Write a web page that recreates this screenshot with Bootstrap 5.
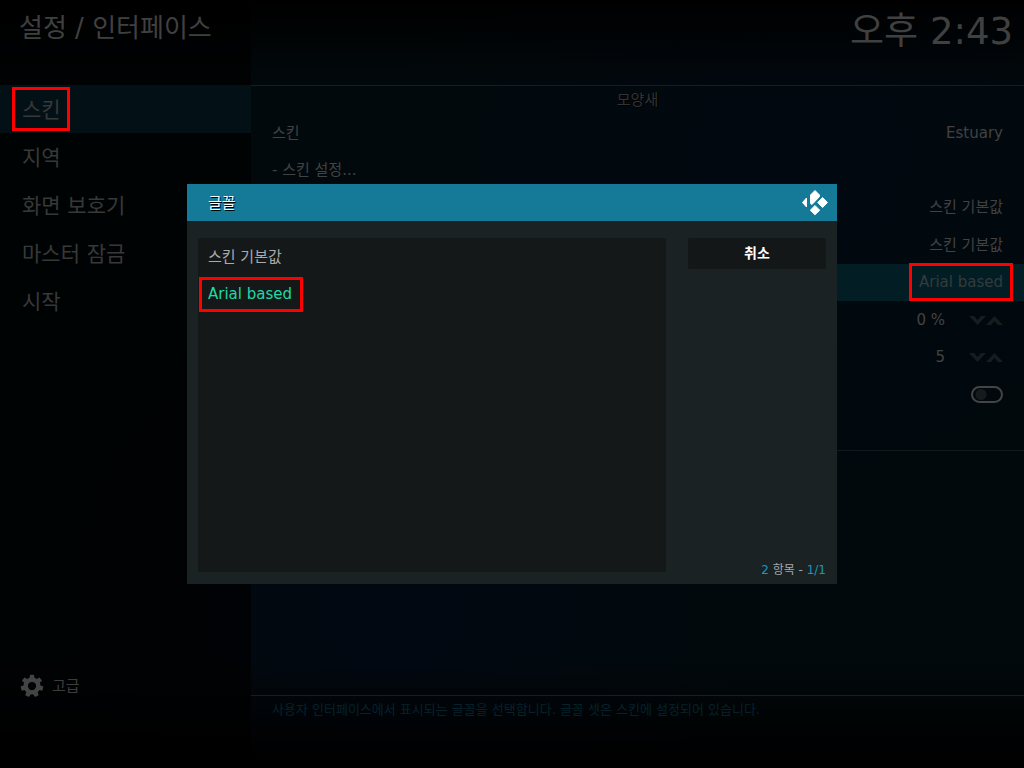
<!DOCTYPE html>
<html lang="ko">
<head>
<meta charset="utf-8">
<meta name="viewport" content="width=device-width, initial-scale=1">
<title>설정 / 인터페이스</title>
<link href="https://cdn.jsdelivr.net/npm/bootstrap@5.3.0/dist/css/bootstrap.min.css" rel="stylesheet">
<style>
body{font-family:"DejaVu Sans","Noto Sans CJK KR",sans-serif;font-size:15px;line-height:20px;color:#424242;background:#000}
.screen{background:linear-gradient(#000 0,transparent 90px,transparent calc(100% - 110px),#000 calc(100% - 10px)),radial-gradient(circle at 78% 20%,#020810 0,transparent 40%),radial-gradient(circle at 38% 80%,#020812 0,transparent 40%),#01090c}
.side{flex:0 0 251px;background:rgba(0,0,0,.65)}
.topbar{height:85px}
.page-title{font-size:26px;line-height:36px;padding:10px 0 0 19px;color:#404040}
.clock{font-size:37px;line-height:42px;padding:11px 11px 0 0;color:#404040}
.menu-link{display:flex;align-items:center;height:48px;padding:2px 0 0 22px;font-size:21px;line-height:28px;color:#383838;text-decoration:none}
.menu-link.active{background:#031116}
.rule-top{border-top:1px solid #05242c}
.rule-end{border-top:1px solid #101a1d}
.group-title{font-size:15px;line-height:28px;color:#333;text-shadow:1px 1px #000}
.settings{display:grid;grid-auto-rows:1fr;min-height:299px;margin-bottom:37px}
.setting{display:flex;align-items:center;padding:0 21px;width:100%;border:0;background:none;color:#424242;text-align:left}
.setting.active{background:#021e24;color:#333b3d}
.value{margin-left:auto}
.steps{width:34px;margin-left:24px}
.step{border:0;padding:2px 0 0;background:none;width:17px;height:12px;display:flex;align-items:center}
.toggle{appearance:none;width:32px;height:17px;border:2px solid #444;border-radius:9px;background:radial-gradient(circle at 8px 50%,#151a1c 5px,transparent 6px)}
.help-text{min-height:73px;font-size:13px;line-height:18px;padding:5px 21px;color:#05222b}
.level{border:0;background:none;padding:0;color:#3c3c3c;margin:0 0 70px 20px}
.marked{position:relative}
.marked::after{content:"";position:absolute;border:3px solid #f00;inset:-9px -10px;pointer-events:none}
.menu-link .marked::after{inset:-9px -9px -7px -10px}
.choice .marked::after{inset:-7px -11px -8px -9px}
.overlay{position:fixed;inset:0}
.dialog-box{width:650px;max-width:100%;min-height:400px;background:#1b2224}
.dialog-head{height:37px;background:#157a98;padding:0 8px 0 21px;color:#fff;text-shadow:1px 1px #000}
.dialog-title{font-size:15px;line-height:20px;margin:0}
.dialog-main{padding:17px 11px 12px;gap:22px}
.choices{background:#141819;border-radius:2px}
.choice{display:flex;align-items:center;height:37px;padding:0 10px;border:0;background:none;color:#aaa}
.choice.active{color:#1fd9a4}
.dialog-side{flex:0 0 138px}
.cancel{height:31px;border:0;border-radius:2px;background:#141718;color:#fff;font-size:14px;line-height:18px;padding:0 0 2px;font-weight:700}
.count{font-size:12px;line-height:16px;color:#a8a8a8;margin-bottom:-6px}
.count b{font-weight:400;color:#1798bd}
</style>
</head>
<body>
<div class="screen d-flex min-vh-100">
  <nav class="side d-flex flex-column">
    <header class="topbar"><h1 class="page-title m-0 fw-normal">설정 / 인터페이스</h1></header>
    <a class="menu-link active" href="#"><span class="marked">스킨</span></a>
    <a class="menu-link" href="#">지역</a>
    <a class="menu-link" href="#">화면 보호기</a>
    <a class="menu-link" href="#">마스터 잠금</a>
    <a class="menu-link" href="#">시작</a>
    <button class="level mt-auto d-flex align-items-center gap-2" type="button">
      <svg width="24" height="24" viewBox="-12 -12 24 24" fill="#444" aria-hidden="true">
        <circle r="6.300" fill="none" stroke="#444" stroke-width="4.400"/>
        <path id="tooth" d="M-2.600-7.500l.6-3.700h4l.6 3.700z"/>
        <use href="#tooth" transform="rotate(51.430)"/>
        <use href="#tooth" transform="rotate(102.860)"/>
        <use href="#tooth" transform="rotate(154.290)"/>
        <use href="#tooth" transform="rotate(205.710)"/>
        <use href="#tooth" transform="rotate(257.140)"/>
        <use href="#tooth" transform="rotate(308.570)"/>
      </svg>
      <span>고급</span>
    </button>
  </nav>
  <main class="flex-grow-1 d-flex flex-column">
    <header class="topbar text-end"><time class="clock d-block">오후 2:43</time></header>
    <section class="rule-top">
      <h2 class="group-title m-0 text-center fw-normal">모양새</h2>
      <div class="settings">
        <button class="setting" type="button">스킨<span class="value">Estuary</span></button>
        <button class="setting" type="button">- 스킨 설정...</button>
        <button class="setting" type="button"><span class="value">스킨 기본값</span></button>
        <button class="setting" type="button"><span class="value">스킨 기본값</span></button>
        <button class="setting active" type="button"><span class="value marked">Arial based</span></button>
        <div class="setting"><span class="value">0 %</span><span class="steps d-flex">
          <button class="step" type="button" aria-label="감소"><svg width="17" height="10"><path d="M0 0h5l3.500 4 3.500-4h5L8.500 9z" fill="#171c1e"/></svg></button>
          <button class="step" type="button" aria-label="증가"><svg width="17" height="10"><path d="M0 9h5l3.500-4 3.500 4h5L8.500 0z" fill="#171c1e"/></svg></button></span></div>
        <div class="setting"><span class="value">5</span><span class="steps d-flex">
          <button class="step" type="button" aria-label="감소"><svg width="17" height="10"><path d="M0 0h5l3.500 4 3.500-4h5L8.500 9z" fill="#171c1e"/></svg></button>
          <button class="step" type="button" aria-label="증가"><svg width="17" height="10"><path d="M0 9h5l3.500-4 3.500 4h5L8.500 0z" fill="#171c1e"/></svg></button></span></div>
        <div class="setting"><input class="toggle ms-auto" type="checkbox" role="switch" aria-label="사용"></div>
      </div>
    </section>
    <div class="rule-end"></div>
    <p class="help-text rule-top mt-auto mb-0">사용자 인터페이스에서 표시되는 글꼴을 선택합니다. 글꼴 셋은 스킨에 설정되어 있습니다.</p>
  </main>
</div>
<div class="overlay d-flex align-items-center justify-content-center">
  <section class="dialog-box d-flex flex-column" role="dialog" aria-labelledby="dlg">
    <header class="dialog-head d-flex align-items-center justify-content-between">
      <h2 class="dialog-title fw-normal" id="dlg">글꼴</h2>
      <svg width="28" height="29" viewBox="0 0 28 29" fill="#fff" stroke="#fff" stroke-linejoin="round" aria-hidden="true"><path d="M1.500 14.500L5.500 10v9zM14 2.500l4.500 4.500v1.500L11 16.500l-1.500-1V7zM21.600 9.500l4.900 5-4.900 5-4.900-5zM14 17.500l4.700 4.700-4.700 4.600-4.700-4.600z"/></svg>
    </header>
    <div class="dialog-main d-flex flex-grow-1">
      <div class="choices flex-grow-1 d-flex flex-column align-items-start">
        <button class="choice" type="button">스킨 기본값</button>
        <button class="choice active" type="button"><span class="marked">Arial based</span></button>
      </div>
      <div class="dialog-side d-flex flex-column">
        <button class="cancel" type="button">취소</button>
        <p class="count mt-auto text-end"><b>2</b> 항목 - <b>1/1</b></p>
      </div>
    </div>
  </section>
</div>
<script src="https://cdn.jsdelivr.net/npm/bootstrap@5.3.0/dist/js/bootstrap.bundle.min.js"></script>
</body>
</html>
